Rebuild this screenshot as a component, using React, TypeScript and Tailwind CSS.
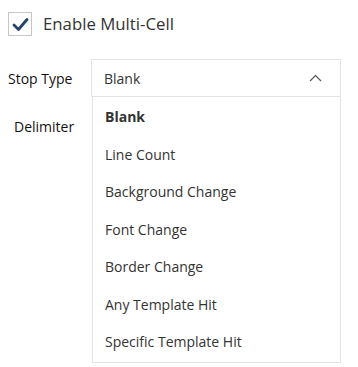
const OPTIONS = [
  "Blank",
  "Line Count",
  "Background Change",
  "Font Change",
  "Border Change",
  "Any Template Hit",
  "Specific Template Hit",
];

export default function App() {
  const selected = "Blank";

  return (
    <div
      className="h-[367px] w-[358px] bg-white text-[#333333]"
      style={{ fontFamily: '"Open Sans", "Noto Sans", sans-serif' }}
    >
      {/* Enable checkbox */}
      <label className="flex items-center gap-[11px] pl-[8px] pt-[12px]">
        <span className="flex h-[24px] w-[24px] items-center justify-center border border-[#c6c6c6] bg-white">
          <svg width="17" height="15" viewBox="0 0 17 15" aria-hidden>
            <path
              d="M2 8 L6.5 12.5 L15 2.5"
              fill="none"
              stroke="#24456b"
              strokeWidth="2.8"
              strokeLinecap="round"
              strokeLinejoin="round"
            />
          </svg>
        </span>
        <span className="text-[16.8px] leading-[24px]">Enable Multi-Cell</span>
      </label>

      <div className="mt-[23px] flex">
        {/* Labels */}
        <div className="flex w-[91px] flex-col">
          <span className="h-[40px] pl-[8px] text-[14px] leading-[40px] text-[#111111]">Stop Type</span>
          <span className="pl-[14px] pt-[18px] text-[14px] leading-[20px] text-[#111111]">Delimiter</span>
        </div>

        {/* Select + open list */}
        <div className="w-[250px]">
          <div className="flex h-[38px] items-center justify-between border border-[#e3e3e3] pl-[12px] pr-[18px] text-[14px]">
            <span>{selected}</span>
            <svg width="13" height="8" viewBox="0 0 13 8" aria-hidden>
              <path d="M1 7 L6.5 1.5 L12 7" fill="none" stroke="#555555" strokeWidth="1.2" />
            </svg>
          </div>
          <ul className="mt-[-1px] ml-[1px] w-[249px] border border-[#e3e3e3] py-[1px]">
            {OPTIONS.map((o) => (
              <li
                key={o}
                className={`flex h-[37.5px] items-center pl-[12px] text-[14px] ${
                  o === selected ? "font-bold" : ""
                }`}
              >
                {o}
              </li>
            ))}
          </ul>
        </div>
      </div>
    </div>
  );
}
